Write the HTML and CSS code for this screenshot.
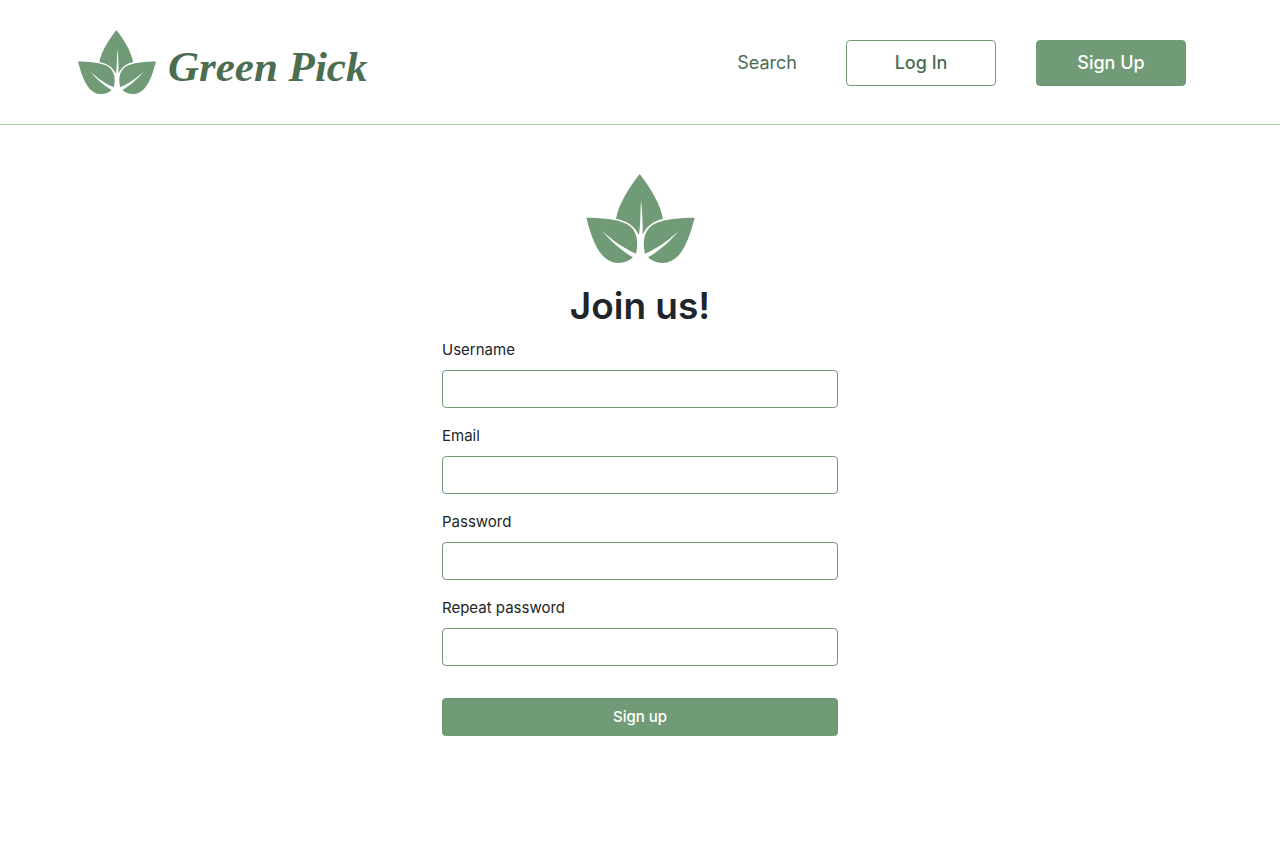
FILE: index.html
```html
<!DOCTYPE html>
<html lang="en">
<head>
<meta charset="utf-8">
<meta name="viewport" content="width=device-width, initial-scale=1">
<title>Green Pick</title>
<link rel="stylesheet" href="styles.css">
</head>
<body>
<svg class="sprite" aria-hidden="true">
  <symbol id="leaves" viewBox="18 27 325 267">
    <path d="M178 27C208 66 240 115 248 161C220 167 198 184 187 209C188 170 185 130 182 107C180 130 181 175 176 210C163 183 140 167 107 161C115 115 148 66 178 27Z"/>
    <path id="side-leaf" d="M18 158C60 158 110 162 138 176C167 191 177 224 167 266C132 251 96 226 66 198C90 227 123 257 158 277C146 289 132 294 115 294C60 294 36 228 18 158Z"/>
    <use href="#side-leaf" transform="translate(361 0) scale(-1 1)"/>
  </symbol>
</svg>
<header class="site-header">
  <a class="brand" href="#">
    <svg class="brand-icon" aria-hidden="true"><use href="#leaves"/></svg>
    <span class="brand-name">Green Pick</span>
  </a>
  <nav class="nav">
    <a class="nav-link" href="#">Search</a>
    <button class="nav-button outline" type="button">Log In</button>
    <button class="nav-button solid" type="button">Sign Up</button>
  </nav>
</header>
<main class="join">
  <svg class="join-icon" aria-hidden="true"><use href="#leaves"/></svg>
  <h1 class="join-title">Join us!</h1>
  <form class="join-form">
    <div class="field"><label for="username">Username</label><input id="username" type="text"></div>
    <div class="field"><label for="email">Email</label><input id="email" type="email"></div>
    <div class="field"><label for="password">Password</label><input id="password" type="password"></div>
    <div class="field"><label for="repeat">Repeat password</label><input id="repeat" type="password"></div>
    <button class="submit" type="submit">Sign up</button>
  </form>
</main>
</body>
</html>
```
FILE: styles.css
```css
* { box-sizing: border-box; }

body {
  margin: 0;
  background: #fff;
  color: #212529;
  font: 400 15px/24px Inter, "Liberation Sans", sans-serif;
}

button, input { font: inherit; }

.sprite { position: absolute; width: 0; height: 0; }

.site-header {
  display: flex;
  flex-wrap: wrap;
  align-items: center;
  justify-content: space-between;
  gap: 24px;
  padding: 30px 94px 30px 78px;
  border-bottom: 1px solid #a3cfa0;
}

.brand {
  display: flex;
  align-items: center;
  gap: 12px;
  color: #4c6e50;
  text-decoration: none;
}

.brand-icon { width: 78px; height: 64px; fill: #719b76; }

.brand-name {
  padding-top: 10px;
  font: italic 700 43px/48px "Liberation Serif", serif;
}

.nav {
  display: flex;
  flex-wrap: wrap;
  align-items: center;
  gap: 40px;
  padding-top: 2px;
}

.nav-link {
  padding-right: 9px;
  color: #4c6e50;
  font-size: 18px;
  text-decoration: none;
}

.nav-button {
  width: 150px;
  height: 46px;
  border: 1px solid #719b76;
  border-radius: 4px;
  font-size: 18px;
  font-weight: 500;
  cursor: pointer;
}

.outline { background: #fff; color: #4c6e50; }
.solid { background: #719b76; color: #fff; }

.join {
  display: flex;
  flex-direction: column;
  align-items: center;
  max-width: 428px;
  margin: 0 auto;
  padding: 49px 16px;
}

.join-icon { width: 109px; height: 89px; fill: #719b76; }

.join-title {
  margin: 19px 0 8px;
  font-size: 37px;
  font-weight: 600;
  line-height: 48px;
}

.join-form { display: flex; flex-direction: column; gap: 16px; width: 100%; }

.field { display: flex; flex-direction: column; gap: 8px; }

.field input {
  width: 100%;
  height: 38px;
  padding: 6px 12px;
  border: 1px solid #719b76;
  border-radius: 4px;
  background: #fff;
  color: inherit;
}

.submit {
  height: 38px;
  margin-top: 16px;
  border: 0;
  border-radius: 4px;
  background: #719b76;
  color: #fff;
  font-weight: 500;
  cursor: pointer;
}
```
